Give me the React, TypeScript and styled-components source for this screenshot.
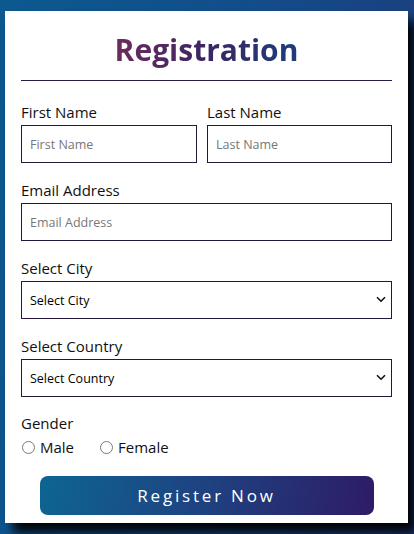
import React from "react";
import styled, { createGlobalStyle } from "styled-components";

const Global = createGlobalStyle`
  html, body { margin: 0; padding: 0; }
  body {
    width: 414px;
    height: 534px;
    overflow: hidden;
    font-family: "Open Sans", "Noto Sans", sans-serif;
    background: linear-gradient(100deg, #0c5990 0%, #134d8a 50%, #1e3a7a 100%);
  }
  * { box-sizing: border-box; }
`;

const Page = styled.div`
  padding: 11px 6px 0 5px;
`;

const Card = styled.form`
  width: 403px;
  height: 512px;
  background: #fff;
  box-shadow: 8px 10px 10px rgba(0, 0, 0, 0.95);
  padding: 19px 16px 0 16px;
  display: flex;
  flex-direction: column;
`;

const Title = styled.h1`
  margin: 0;
  text-align: center;
  font-size: 30px;
  font-weight: 700;
  line-height: 40px;
  background: linear-gradient(90deg, #6e2b5c 0%, #3b2563 50%, #1b3e7c 100%);
  background-clip: text;
  -webkit-background-clip: text;
  color: transparent;
  align-self: center;
  padding: 0 2px;
`;

const Rule = styled.hr`
  margin: 10px 0 0 0;
  border: none;
  border-top: 1px solid #2a1a4a;
`;

const Fields = styled.div`
  display: flex;
  flex-direction: column;
  gap: 17px;
  margin-top: 21px;
`;

const Row = styled.div`
  display: grid;
  grid-template-columns: 176px 1fr;
  gap: 10px;
`;

const Group = styled.div`
  display: flex;
  flex-direction: column;
  gap: 3px;
`;

const Label = styled.label`
  font-size: 15px;
  line-height: 20px;
  color: #111;
`;

const Input = styled.input`
  height: 38px;
  width: 100%;
  border: 1px solid #24183f;
  padding: 0 8px;
  font-family: "Open Sans", "Noto Sans", sans-serif;
  font-size: 12.5px;
  color: #111;
  outline: none;
  &::placeholder { color: #777; }
`;

const SelectWrap = styled.div`
  position: relative;
`;

const Select = styled.select`
  appearance: none;
  height: 38px;
  width: 100%;
  border: 1px solid #24183f;
  border-radius: 0;
  background: #fff;
  padding: 0 8px;
  font-family: "Open Sans", "Noto Sans", sans-serif;
  font-size: 12.5px;
  color: #000;
`;

const Chevron = styled.svg`
  position: absolute;
  right: 6px;
  top: 15px;
  pointer-events: none;
`;

const GenderBlock = styled.div`
  display: flex;
  flex-direction: column;
  margin-top: -1px;
`;

const Radios = styled.div`
  display: flex;
  gap: 25px;
  align-items: center;
  margin-top: 3px;
`;

const RadioLabel = styled.label`
  display: flex;
  align-items: center;
  gap: 5px;
  font-size: 15px;
  line-height: 22px;
  color: #111;
`;

const RadioDot = styled.span`
  width: 13px;
  height: 13px;
  border-radius: 50%;
  border: 1.6px solid #7a7a7a;
  display: inline-block;
  margin-left: 1px;
`;

const Button = styled.button`
  margin: 18px auto 0;
  width: 334px;
  height: 39px;
  border: none;
  border-radius: 8px;
  background: linear-gradient(100deg, #0d6592 0%, #1d4582 45%, #2e1b66 100%);
  color: #fff;
  font-family: "Open Sans", "Noto Sans", sans-serif;
  font-size: 17px;
  letter-spacing: 2.8px;
  padding: 0;
`;

function Field({ label, placeholder }: { label: string; placeholder: string }) {
  return (
    <Group>
      <Label>{label}</Label>
      <Input placeholder={placeholder} />
    </Group>
  );
}

function SelectField({ label }: { label: string }) {
  return (
    <Group>
      <Label>{label}</Label>
      <SelectWrap>
        <Select defaultValue="">
          <option value="">{label}</option>
        </Select>
        <Chevron width="10" height="7" viewBox="0 0 10 7">
          <path d="M1 1.2 L5 5.2 L9 1.2" fill="none" stroke="#111" strokeWidth="1.6" />
        </Chevron>
      </SelectWrap>
    </Group>
  );
}

export default function App() {
  return (
    <Page>
      <Global />
      <Card onSubmit={(e) => e.preventDefault()}>
        <Title>Registration</Title>
        <Rule />
        <Fields>
          <Row>
            <Field label="First Name" placeholder="First Name" />
            <Field label="Last Name" placeholder="Last Name" />
          </Row>
          <Field label="Email Address" placeholder="Email Address" />
          <SelectField label="Select City" />
          <SelectField label="Select Country" />
          <GenderBlock>
            <Label>Gender</Label>
            <Radios>
              <RadioLabel>
                <RadioDot />
                Male
              </RadioLabel>
              <RadioLabel>
                <RadioDot />
                Female
              </RadioLabel>
            </Radios>
          </GenderBlock>
        </Fields>
        <Button type="submit">Register Now</Button>
      </Card>
    </Page>
  );
}
